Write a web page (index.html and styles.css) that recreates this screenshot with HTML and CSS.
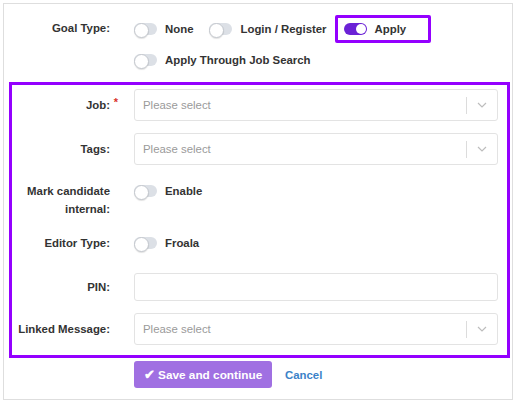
FILE: index.html
```html
<!DOCTYPE html>
<html>
<head>
<meta charset="utf-8">
<link rel="stylesheet" href="styles.css">
</head>
<body>
<div class="card">
  <div class="goal">
    <div class="goal-label">Goal Type:</div>
    <div class="goal-options">
      <label class="opt opt-none"><span class="toggle"></span><span>None</span></label>
      <label class="opt opt-login"><span class="toggle"></span><span>Login / Register</span></label>
      <label class="opt opt-apply"><span class="toggle on"></span><span>Apply</span></label>
      <label class="opt"><span class="toggle"></span><span>Apply Through Job Search</span></label>
    </div>
  </div>

  <div class="panel">
    <div class="row row-select">
      <div class="label"><span class="req">Job:<span class="star">*</span></span></div>
      <div class="select"><span class="ph">Please select</span><span class="sep"></span><span class="ind"><svg width="10" height="6" viewBox="0 0 10 6"><path d="M1 1 L5 5 L9 1" fill="none" stroke="#bdbdbd" stroke-width="1.2"/></svg></span></div>
    </div>
    <div class="row row-select">
      <div class="label">Tags:</div>
      <div class="select"><span class="ph">Please select</span><span class="sep"></span><span class="ind"><svg width="10" height="6" viewBox="0 0 10 6"><path d="M1 1 L5 5 L9 1" fill="none" stroke="#bdbdbd" stroke-width="1.2"/></svg></span></div>
    </div>
    <div class="row row-mark">
      <div class="label">Mark candidate<br>internal:</div>
      <label class="opt"><span class="toggle"></span><span>Enable</span></label>
    </div>
    <div class="row row-editor">
      <div class="label">Editor Type:</div>
      <label class="opt"><span class="toggle"></span><span>Froala</span></label>
    </div>
    <div class="row row-pin">
      <div class="label">PIN:</div>
      <div class="input"></div>
    </div>
    <div class="row row-select">
      <div class="label">Linked Message:</div>
      <div class="select"><span class="ph">Please select</span><span class="sep"></span><span class="ind"><svg width="10" height="6" viewBox="0 0 10 6"><path d="M1 1 L5 5 L9 1" fill="none" stroke="#bdbdbd" stroke-width="1.2"/></svg></span></div>
    </div>
  </div>

  <div class="actions">
    <button class="btn-save"><span class="check">✔</span> Save and continue</button>
    <a class="cancel">Cancel</a>
  </div>
</div>
</body>
</html>
```

FILE: styles.css
```css
* { box-sizing: border-box; }
html, body { margin: 0; padding: 0; background: #fff; }
body {
  font-family: "Liberation Sans", Arial, sans-serif;
  font-size: 11.4px;
  color: #333;
}
.card {
  margin: 3px 2px 0 3px;
  height: 397px;
  border: 1px solid #dedede;
  padding: 11px 0 0 0;
}
.goal {
  display: grid;
  grid-template-columns: 106px 1fr;
  column-gap: 24px;
}
.goal-label {
  font-weight: bold;
  text-align: right;
  line-height: 18px;
  padding-top: 4px;
}
.goal-options {
  display: flex;
  flex-wrap: wrap;
  align-items: center;
  row-gap: 8px;
  width: 364px;
}
.opt {
  display: inline-flex;
  align-items: center;
  gap: 8px;
  font-weight: bold;
  line-height: 18px;
  white-space: nowrap;
}
.opt-none { margin-right: 16px; }
.opt-login { margin-right: 8px; }
.opt-apply {
  border: 3px solid #9400ff;
  border-radius: 2px;
  height: 28px;
  padding: 0 22px 0 6px;
  gap: 8px;
}
.toggle {
  position: relative;
  display: inline-block;
  width: 23px;
  height: 12px;
  border-radius: 6px;
  background: #dce0e6;
}
.toggle::after {
  content: "";
  position: absolute;
  left: 0;
  top: -0.5px;
  width: 13px;
  height: 13px;
  border-radius: 50%;
  background: #fff;
  border: 1px solid #c4c8ce;
  box-shadow: 0 1px 1px rgba(0,0,0,0.12);
}
.toggle.on { background: #6b22d6; }
.toggle.on::after {
  left: auto;
  right: 1px;
  top: 1px;
  width: 10px;
  height: 10px;
  border: none;
  box-shadow: none;
}
.panel {
  margin: 13px 2px 0 5px;
  border: 3px solid #9400ff;
  padding: 4px 9px 10px 0;
  display: flex;
  flex-direction: column;
  gap: 12px;
}
.row {
  display: grid;
  grid-template-columns: 98px 1fr;
  column-gap: 24px;
  align-items: start;
}
.label {
  font-weight: bold;
  text-align: right;
  line-height: 18px;
}
.row-select .label { padding-top: 7px; }
.row-pin .label { padding-top: 5px; }
.row-mark { padding-top: 5px; padding-bottom: 4px; }
.row-editor { padding-bottom: 9px; }
.req { position: relative; }
.star {
  position: absolute;
  right: -8px;
  top: -6px;
  color: #d9342b;
  font-size: 11px;
}
.select {
  display: flex;
  align-items: center;
  height: 32px;
  border: 1px solid #e3e3e3;
  border-radius: 3px;
  padding-left: 8px;
}
.ph { flex: 1; color: #9a9a9a; }
.sep { width: 1px; height: 17px; background: #dcdcdc; }
.ind {
  width: 30px;
  display: flex;
  justify-content: center;
  align-items: center;
}
.input {
  height: 28px;
  border: 1px solid #e3e3e3;
  border-radius: 3px;
}
.actions {
  display: flex;
  align-items: center;
  margin: 3px 0 0 130px;
  gap: 13px;
}
.btn-save {
  font-family: inherit;
  font-size: 11.8px;
  font-weight: bold;
  color: #fff;
  background: #a070e2;
  border: none;
  border-radius: 3px;
  height: 27px;
  width: 138px;
  padding: 0;
}
.check { font-size: 13px; }
.cancel {
  color: #3b82c8;
  font-weight: bold;
}
```
